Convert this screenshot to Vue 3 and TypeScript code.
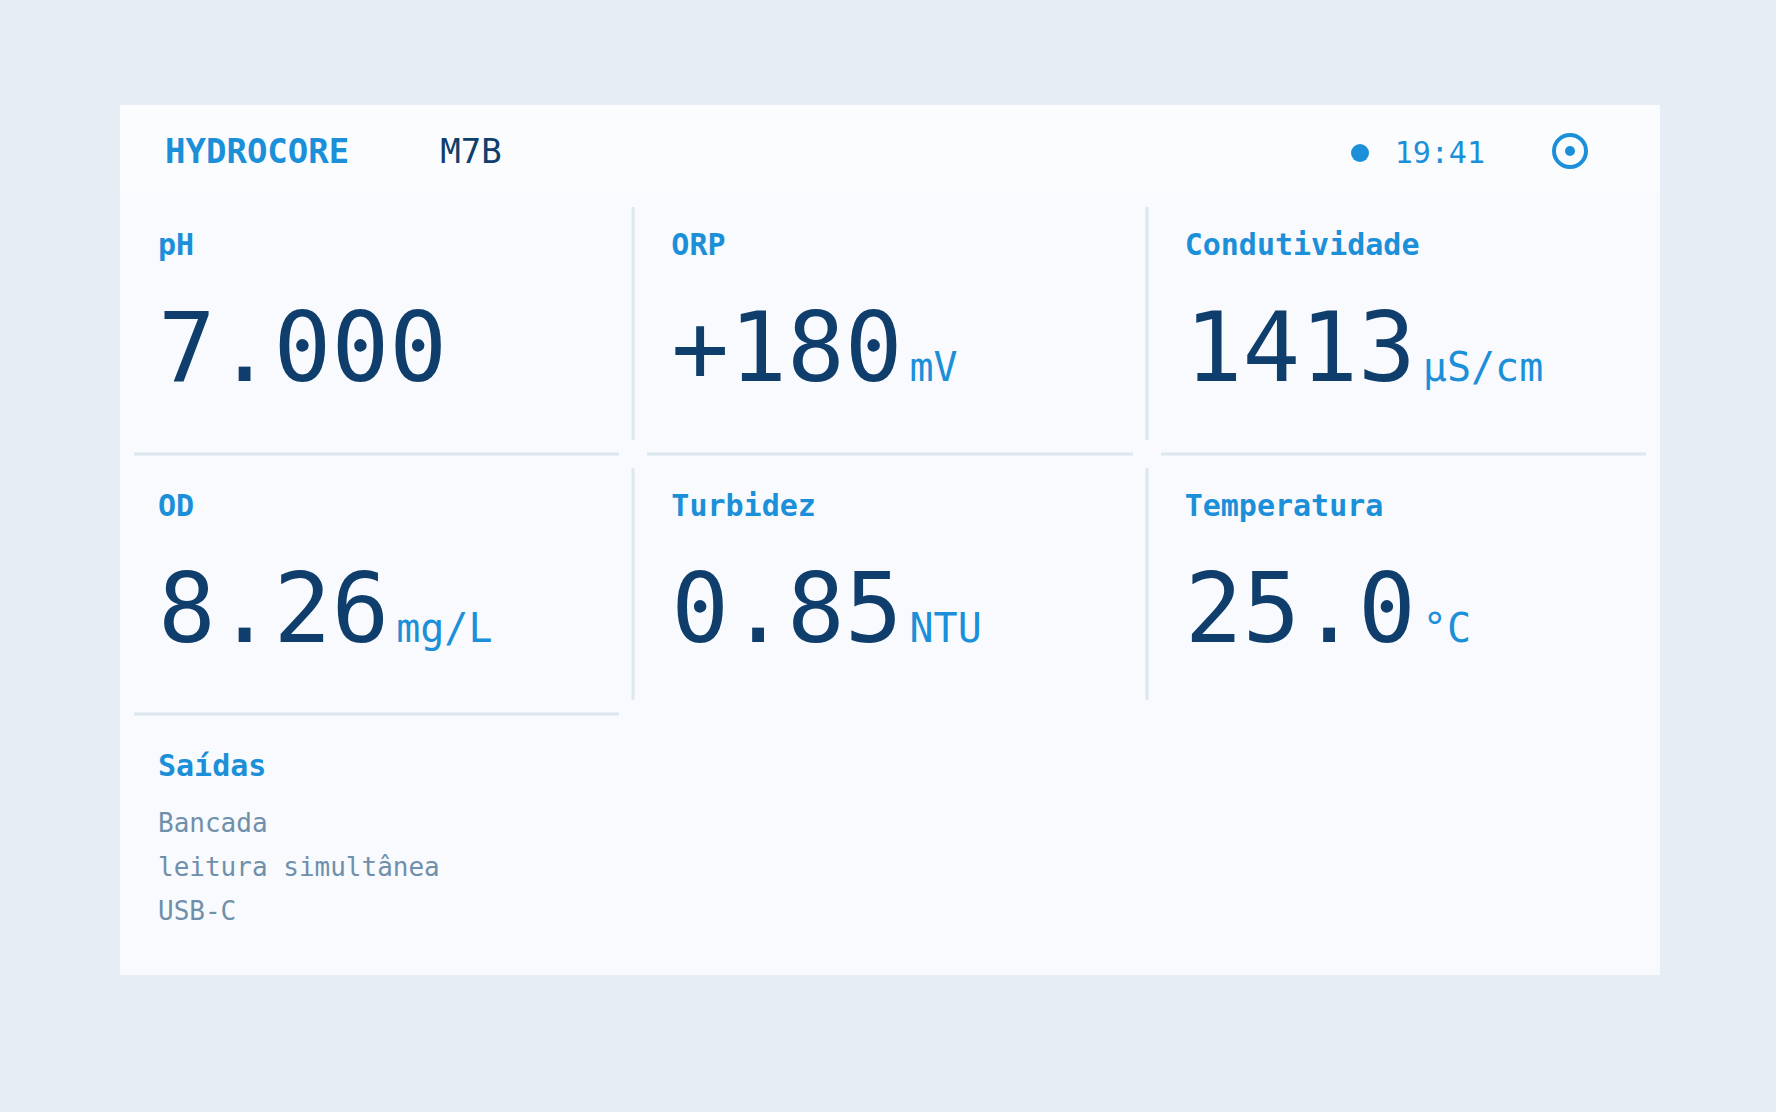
<script setup lang="ts">
interface Reading {
  label: string
  value: string
  unit?: string
}

const readings: Reading[] = [
  { label: 'pH', value: '7.000' },
  { label: 'ORP', value: '+180', unit: 'mV' },
  { label: 'Condutividade', value: '1413', unit: 'µS/cm' },
  { label: 'OD', value: '8.26', unit: 'mg/L' },
  { label: 'Turbidez', value: '0.85', unit: 'NTU' },
  { label: 'Temperatura', value: '25.0', unit: '°C' },
]

const outputs: string[] = ['Bancada', 'leitura simultânea', 'USB-C']

const columns = 3

const hasRight = (index: number): boolean => index % columns < columns - 1
const hasBottom = (index: number): boolean => index + columns <= readings.length
</script>

<template>
  <div class="page">
    <main class="panel">
      <header class="bar">
        <h1 class="brand">HYDROCORE</h1>
        <span class="model">M7B</span>
        <div class="status">
          <span class="dot"></span>
          <time class="time">19:41</time>
        </div>
        <svg class="target" viewBox="0 0 36 36" aria-hidden="true">
          <circle cx="18" cy="18" r="16" fill="none" stroke="currentColor" stroke-width="4" />
          <circle cx="18" cy="18" r="5" fill="currentColor" />
        </svg>
      </header>
      <div class="grid">
        <section
          v-for="(reading, index) in readings"
          :key="reading.label"
          class="cell"
          :class="{ 'line-right': hasRight(index), 'line-bottom': hasBottom(index) }"
        >
          <h2 class="label">{{ reading.label }}</h2>
          <p class="reading">
            <span class="value">{{ reading.value }}</span>
            <span v-if="reading.unit" class="unit">{{ reading.unit }}</span>
          </p>
        </section>
        <section class="cell">
          <h2 class="label">Saídas</h2>
          <ul class="outputs">
            <li v-for="output in outputs" :key="output">{{ output }}</li>
          </ul>
        </section>
      </div>
    </main>
  </div>
</template>

<style>
body {
  margin: 0;
  background: #e6edf5;
}
</style>

<style scoped>
.page {
  --blue: #1c8fd9;
  --navy: #0f3e6c;
  --line: #dce7f0;
  box-sizing: border-box;
  min-height: 100vh;
  padding: 105px 116px 137px 120px;
  display: flex;
  flex-direction: column;
  background: #e6edf5;
  color: var(--navy);
  font-family: 'DejaVu Sans Mono', monospace;
}

.panel {
  flex: 1;
  display: flex;
  flex-direction: column;
  background: #f8fafd;
}

.bar {
  display: flex;
  align-items: baseline;
  padding: 26px 72px 22px 45px;
  background: #fbfcfe;
  font-size: 34px;
  line-height: 40px;
}

.brand {
  margin: 0;
  color: var(--blue);
  font-size: 34px;
  font-weight: 700;
}

.model {
  margin-left: 91px;
}

.status {
  display: flex;
  gap: 26px;
  margin-left: auto;
  color: var(--blue);
  font-size: 30px;
  line-height: 36px;
}

.dot {
  align-self: center;
  width: 18px;
  height: 18px;
  border-radius: 50%;
  background: currentColor;
}

.time {
  align-self: baseline;
}

.target {
  align-self: center;
  width: 36px;
  height: 36px;
  margin-left: 67px;
  color: var(--blue);
}

.grid {
  flex: 1;
  display: grid;
  grid-template-columns: repeat(3, 1fr);
  grid-auto-rows: 1fr;
}

.cell {
  position: relative;
  padding: 34px 14px 24px 38px;
}

/* Rules straddle the edge shared by two cells and stop short of the corners. */
.line-right::after,
.line-bottom::before {
  content: '';
  position: absolute;
  background: var(--line);
}

.line-right::after {
  top: 14px;
  bottom: 14px;
  right: 0;
  width: 3px;
  transform: translateX(50%);
}

.line-bottom::before {
  left: 14px;
  right: 14px;
  bottom: 0;
  height: 3px;
  transform: translateY(50%);
}

.label {
  margin: 0;
  color: var(--blue);
  font-size: 30px;
  font-weight: 700;
  line-height: 36px;
}

.reading {
  display: flex;
  align-items: baseline;
  gap: 7px;
  margin: 37px 0 0;
  line-height: 96px;
}

.value {
  font-size: 96px;
}

.unit {
  color: var(--blue);
  font-size: 40px;
}

.outputs {
  margin: 17px 0 0;
  padding: 0;
  list-style: none;
  color: #6f8fab;
  font-size: 26px;
  line-height: 44px;
}
</style>
